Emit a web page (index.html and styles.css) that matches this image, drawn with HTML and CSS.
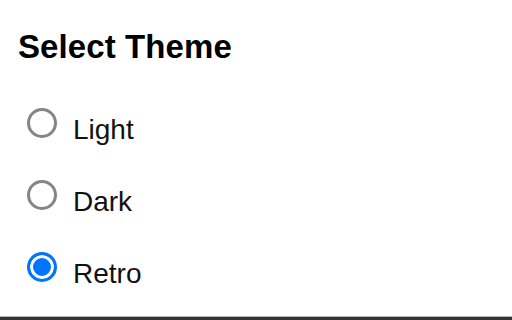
FILE: index.html
```html
<!DOCTYPE html>
<html lang="en">
<head>
<meta charset="utf-8">
<title>Select Theme</title>
<link rel="stylesheet" href="styles.css">
</head>
<body>
<div class="page">
  <h2 class="title">Select Theme</h2>
  <div class="options">
    <label class="option"><input type="radio" name="theme" class="radio"><span class="label-text">Light</span></label>
    <label class="option"><input type="radio" name="theme" class="radio"><span class="label-text">Dark</span></label>
    <label class="option"><input type="radio" name="theme" class="radio" checked><span class="label-text">Retro</span></label>
  </div>
</div>
</body>
</html>
```

FILE: styles.css
```css
html, body {
  margin: 0;
  padding: 0;
  background: #fff;
}

.page {
  box-sizing: border-box;
  height: 320px;
  padding: 30px 0 0 18px;
  border-bottom: 3px solid #333;
  box-shadow: inset 0 -1px 0 #b8b8b8;
  font-family: "Liberation Sans", Arial, sans-serif;
  color: #000;
}

.title {
  margin: 0 0 45px 0;
  font-size: 33px;
  line-height: 33px;
  font-weight: bold;
  letter-spacing: 0.1px;
}

.options {
  display: flex;
  flex-direction: column;
  gap: 36px;
  padding-left: 9px;
}

.option {
  display: flex;
  align-items: flex-start;
  gap: 16px;
  height: 36px;
}

.radio {
  appearance: none;
  -webkit-appearance: none;
  box-sizing: border-box;
  width: 30px;
  height: 30px;
  margin: 0;
  border: 3px solid #858585;
  border-radius: 50%;
  background: #fff;
  flex: none;
}

.radio:checked {
  border-color: #0075ff;
  background: #0075ff;
  box-shadow: inset 0 0 0 3px #fff;
}

.label-text {
  margin-top: 8px;
  font-size: 28px;
  line-height: 28px;
  color: #111;
}
```
